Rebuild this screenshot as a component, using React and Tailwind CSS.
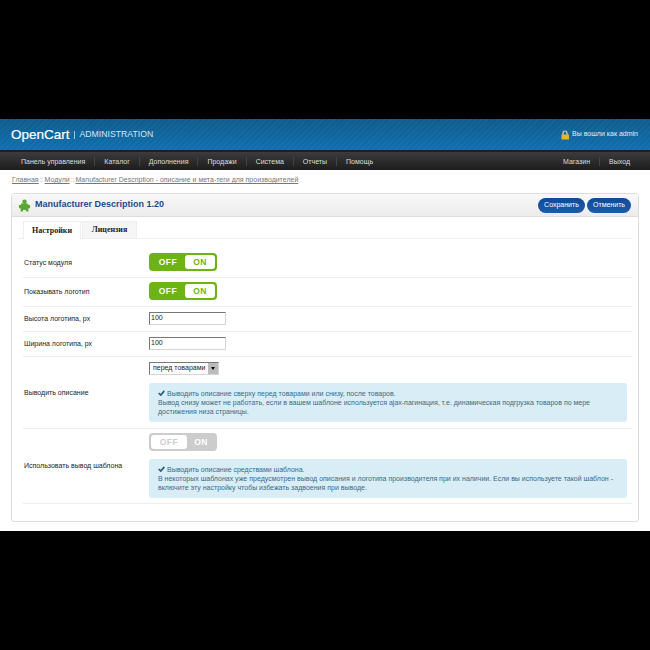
const Toggle = ({ active }) => (
  active ? (
    <div className="flex h-[18px] w-[68px] rounded-[4px] border-2 border-[#6cb313] bg-[#6cb313] text-[8.5px] font-bold tracking-[0.5px]">
      <div className="flex w-[34px] items-center justify-center pt-px text-white">OFF</div>
      <div className="flex flex-1 items-center justify-center rounded-[3px] bg-white pt-px text-[#6cb313]">ON</div>
    </div>
  ) : (
    <div className="flex h-[18px] w-[68px] rounded-[4px] border-2 border-[#cccccc] bg-[#cccccc] text-[8.5px] font-bold tracking-[0.5px]">
      <div className="flex w-[36px] items-center justify-center rounded-[3px] bg-white pt-px text-[#cccccc]">OFF</div>
      <div className="flex flex-1 items-center justify-center pt-px text-white">ON</div>
    </div>
  )
);

const TextBox = () => (
  <div className="flex h-[13px] w-[77px] items-center border border-[#d5d5d5] border-t-[#777777] border-l-[#777777] bg-white pl-[1px] text-[7px] text-[#222222]">100</div>
);

const Note = ({ children }) => (
  <div className="h-[39px] w-[478px] rounded-[3px] bg-[#d9edf7] pl-[9px] pt-[6px] text-[7px] leading-[9px] text-[#3a6a85]">{children}</div>
);

const Check = () => (
  <svg viewBox="0 0 10 8" className="mr-[2px] inline-block h-[6px] w-[7px] align-[-0.5px]">
    <path d="M1 4l3 3 5-6" fill="none" stroke="#2f5f7a" strokeWidth="2.4" />
  </svg>
);

const Row = ({ label, height, children }) => (
  <div className={`flex items-center border-b border-[#eeeeee] ${height}`}>
    <div className="w-[126px] pl-[1px] pt-[1px] text-[7px] text-[#222222]">{label}</div>
    <div className="pb-[2px]">{children}</div>
  </div>
);

const navLeft = ['Панель управления', 'Каталог', 'Дополнения', 'Продажи', 'Система', 'Отчеты', 'Помощь'];

export default function App() {
  return (
    <div className="flex h-[650px] w-[650px] flex-col overflow-hidden bg-black font-['Liberation_Sans',sans-serif]">
      <div className="h-[119px] shrink-0" />

      <div className="flex h-[31px] shrink-0 items-center justify-between bg-[repeating-linear-gradient(135deg,rgba(255,255,255,0.03)_0px,rgba(255,255,255,0.03)_2px,transparent_2px,transparent_4px),linear-gradient(to_bottom,#0f5a8c,#0e70ae)] pl-[11px] pr-[12px]">
        <div className="flex items-center">
          <span className="text-[13.5px] font-medium leading-none text-white [-webkit-text-stroke:0.2px_white]">OpenCart</span>
          <span className="ml-[4px] mr-[5px] h-[8px] w-px bg-[#9cc4dd]" />
          <span className="text-[8.7px] leading-none text-[#d5e6f1]">ADMINISTRATION</span>
        </div>
        <div className="flex items-center text-[7px] text-[#e2edf5]">
          <svg viewBox="0 0 10 10" className="mr-[2px] h-[10px] w-[10px]">
            <path d="M3 5V3a2 2 0 0 1 4 0v2" fill="none" stroke="#d9d9c8" strokeWidth="1.2" />
            <rect x="1.5" y="4.5" width="7.5" height="5" rx="0.6" fill="#eeb22f" />
          </svg>
          <span>Вы вошли как admin</span>
        </div>
      </div>

      <div className="flex h-[20px] shrink-0 items-center justify-between border-t-2 border-[#17222a] bg-gradient-to-b from-[#3c3c3c] to-[#1d1d1d] pl-[12px] pr-[11px] text-[7px] text-[#dddddd] shadow-[0_2px_3px_rgba(0,0,0,0.12)]">
        <div className="flex">
          {navLeft.map((item, i) => (
            <span key={item} className={`px-[9px] leading-[9px] ${i ? 'border-l border-[#454545]' : ''}`}>{item}</span>
          ))}
        </div>
        <div className="flex">
          <span className="px-[9px] leading-[9px]">Магазин</span>
          <span className="border-l border-[#454545] px-[9px] leading-[9px]">Выход</span>
        </div>
      </div>

      <div className="flex-1 bg-white px-[11px]">
        <div className="flex h-[23px] items-center pb-[2px] pl-px text-[7px] text-[#777777]">
          <span className="underline">Главная</span>
          <span className="px-[1px] text-[#aaaaaa]">::</span>
          <span className="underline">Модули</span>
          <span className="px-[1px] text-[#aaaaaa]">::</span>
          <span className="underline">Manufacturer Description - описание и мета-теги для производителей</span>
        </div>

        <div className="h-[329px] w-[628px] rounded-[3px] border border-[#dddddd]">
          <div className="flex h-[23px] items-center justify-between border-b border-[#dddddd] bg-gradient-to-b from-[#f8f8f8] to-[#ececec] pl-[6px] pr-[7px]">
            <div className="flex items-center">
              <svg viewBox="0 0 14 14" className="mr-[4px] h-[13px] w-[13px]">
                <circle cx="7" cy="3" r="2.4" fill="#58a832" />
                <path d="M3.5 4.8h7l.7 1.7h1.8v3.4h-1.8v3.6H8.6v-1.7H5.4v1.7H2.8V9.9H1V6.5h1.8z" fill="#58a832" />
              </svg>
              <span className="text-[9px] font-bold text-[#1c4a90]">Manufacturer Description 1.20</span>
            </div>
            <div className="flex gap-[2px]">
              <div className="flex h-[15px] w-[47px] items-center justify-center rounded-[8px] bg-gradient-to-b from-[#0e4a96] to-[#1c5bab] text-[7px] text-white">Сохранить</div>
              <div className="flex h-[15px] w-[44px] items-center justify-center rounded-[8px] bg-gradient-to-b from-[#0e4a96] to-[#1c5bab] text-[7px] text-white">Отменить</div>
            </div>
          </div>

          <div className="px-[6px] pt-[4px]">
            <div className="flex h-[18px] border-b border-[#eeeeee] pl-[5px] font-['Liberation_Serif',serif] text-[8px] font-bold text-[#222222]">
              <div className="flex h-[18px] w-[58px] items-center justify-center border border-b-0 border-[#eeeeee] bg-white">Настройки</div>
              <div className="ml-px flex h-[17px] w-[55px] items-center justify-center border border-b-0 border-[#eeeeee] bg-[#f6f6f6]">Лицензия</div>
            </div>

            <div className="pl-[5px] pt-[9px]">
              <Row label="Статус модуля" height="h-[30px]"><Toggle active /></Row>
              <Row label="Показывать логотип" height="h-[29px]"><Toggle active /></Row>
              <Row label="Высота логотипа, px" height="h-[25px]"><TextBox /></Row>
              <Row label="Ширина логотипа, px" height="h-[25px]"><TextBox /></Row>
              <Row label="Выводить описание" height="h-[72px]">
                <div className="flex flex-col gap-[8px]">
                  <div className="flex h-[13px] w-[70px] items-center justify-between whitespace-nowrap border border-[#d5d5d5] border-t-[#777777] border-l-[#777777] pl-[3px] text-[7px] text-[#222222]">
                    <span>перед товарами</span>
                    <span className="flex h-full w-[10px] items-center justify-center bg-[#bbbbbb]">
                      <span className="h-0 w-0 border-x-[2.5px] border-t-[3px] border-x-transparent border-t-black" />
                    </span>
                  </div>
                  <Note>
                    <div><Check />Выводить описание сверху перед товарами или снизу, после товаров.</div>
                    <div>Вывод снизу может не работать, если в вашем шаблоне используется ajax-пагинация, т.е. динамическая подгрузка товаров по мере</div>
                    <div>достижения низа страницы.</div>
                  </Note>
                </div>
              </Row>
              <Row label="Использовать вывод шаблона" height="h-[75px]">
                <div className="flex flex-col gap-[8px]">
                  <Toggle />
                  <Note>
                    <div><Check />Выводить описание средствами шаблона.</div>
                    <div>В некоторых шаблонах уже предусмотрен вывод описания и логотипа производителя при их наличии. Если вы используете такой шаблон -</div>
                    <div>включите эту настройку чтобы избежать задвоения при выводе.</div>
                  </Note>
                </div>
              </Row>
            </div>
          </div>
        </div>
      </div>

      <div className="h-[119px] shrink-0" />
    </div>
  );
}
